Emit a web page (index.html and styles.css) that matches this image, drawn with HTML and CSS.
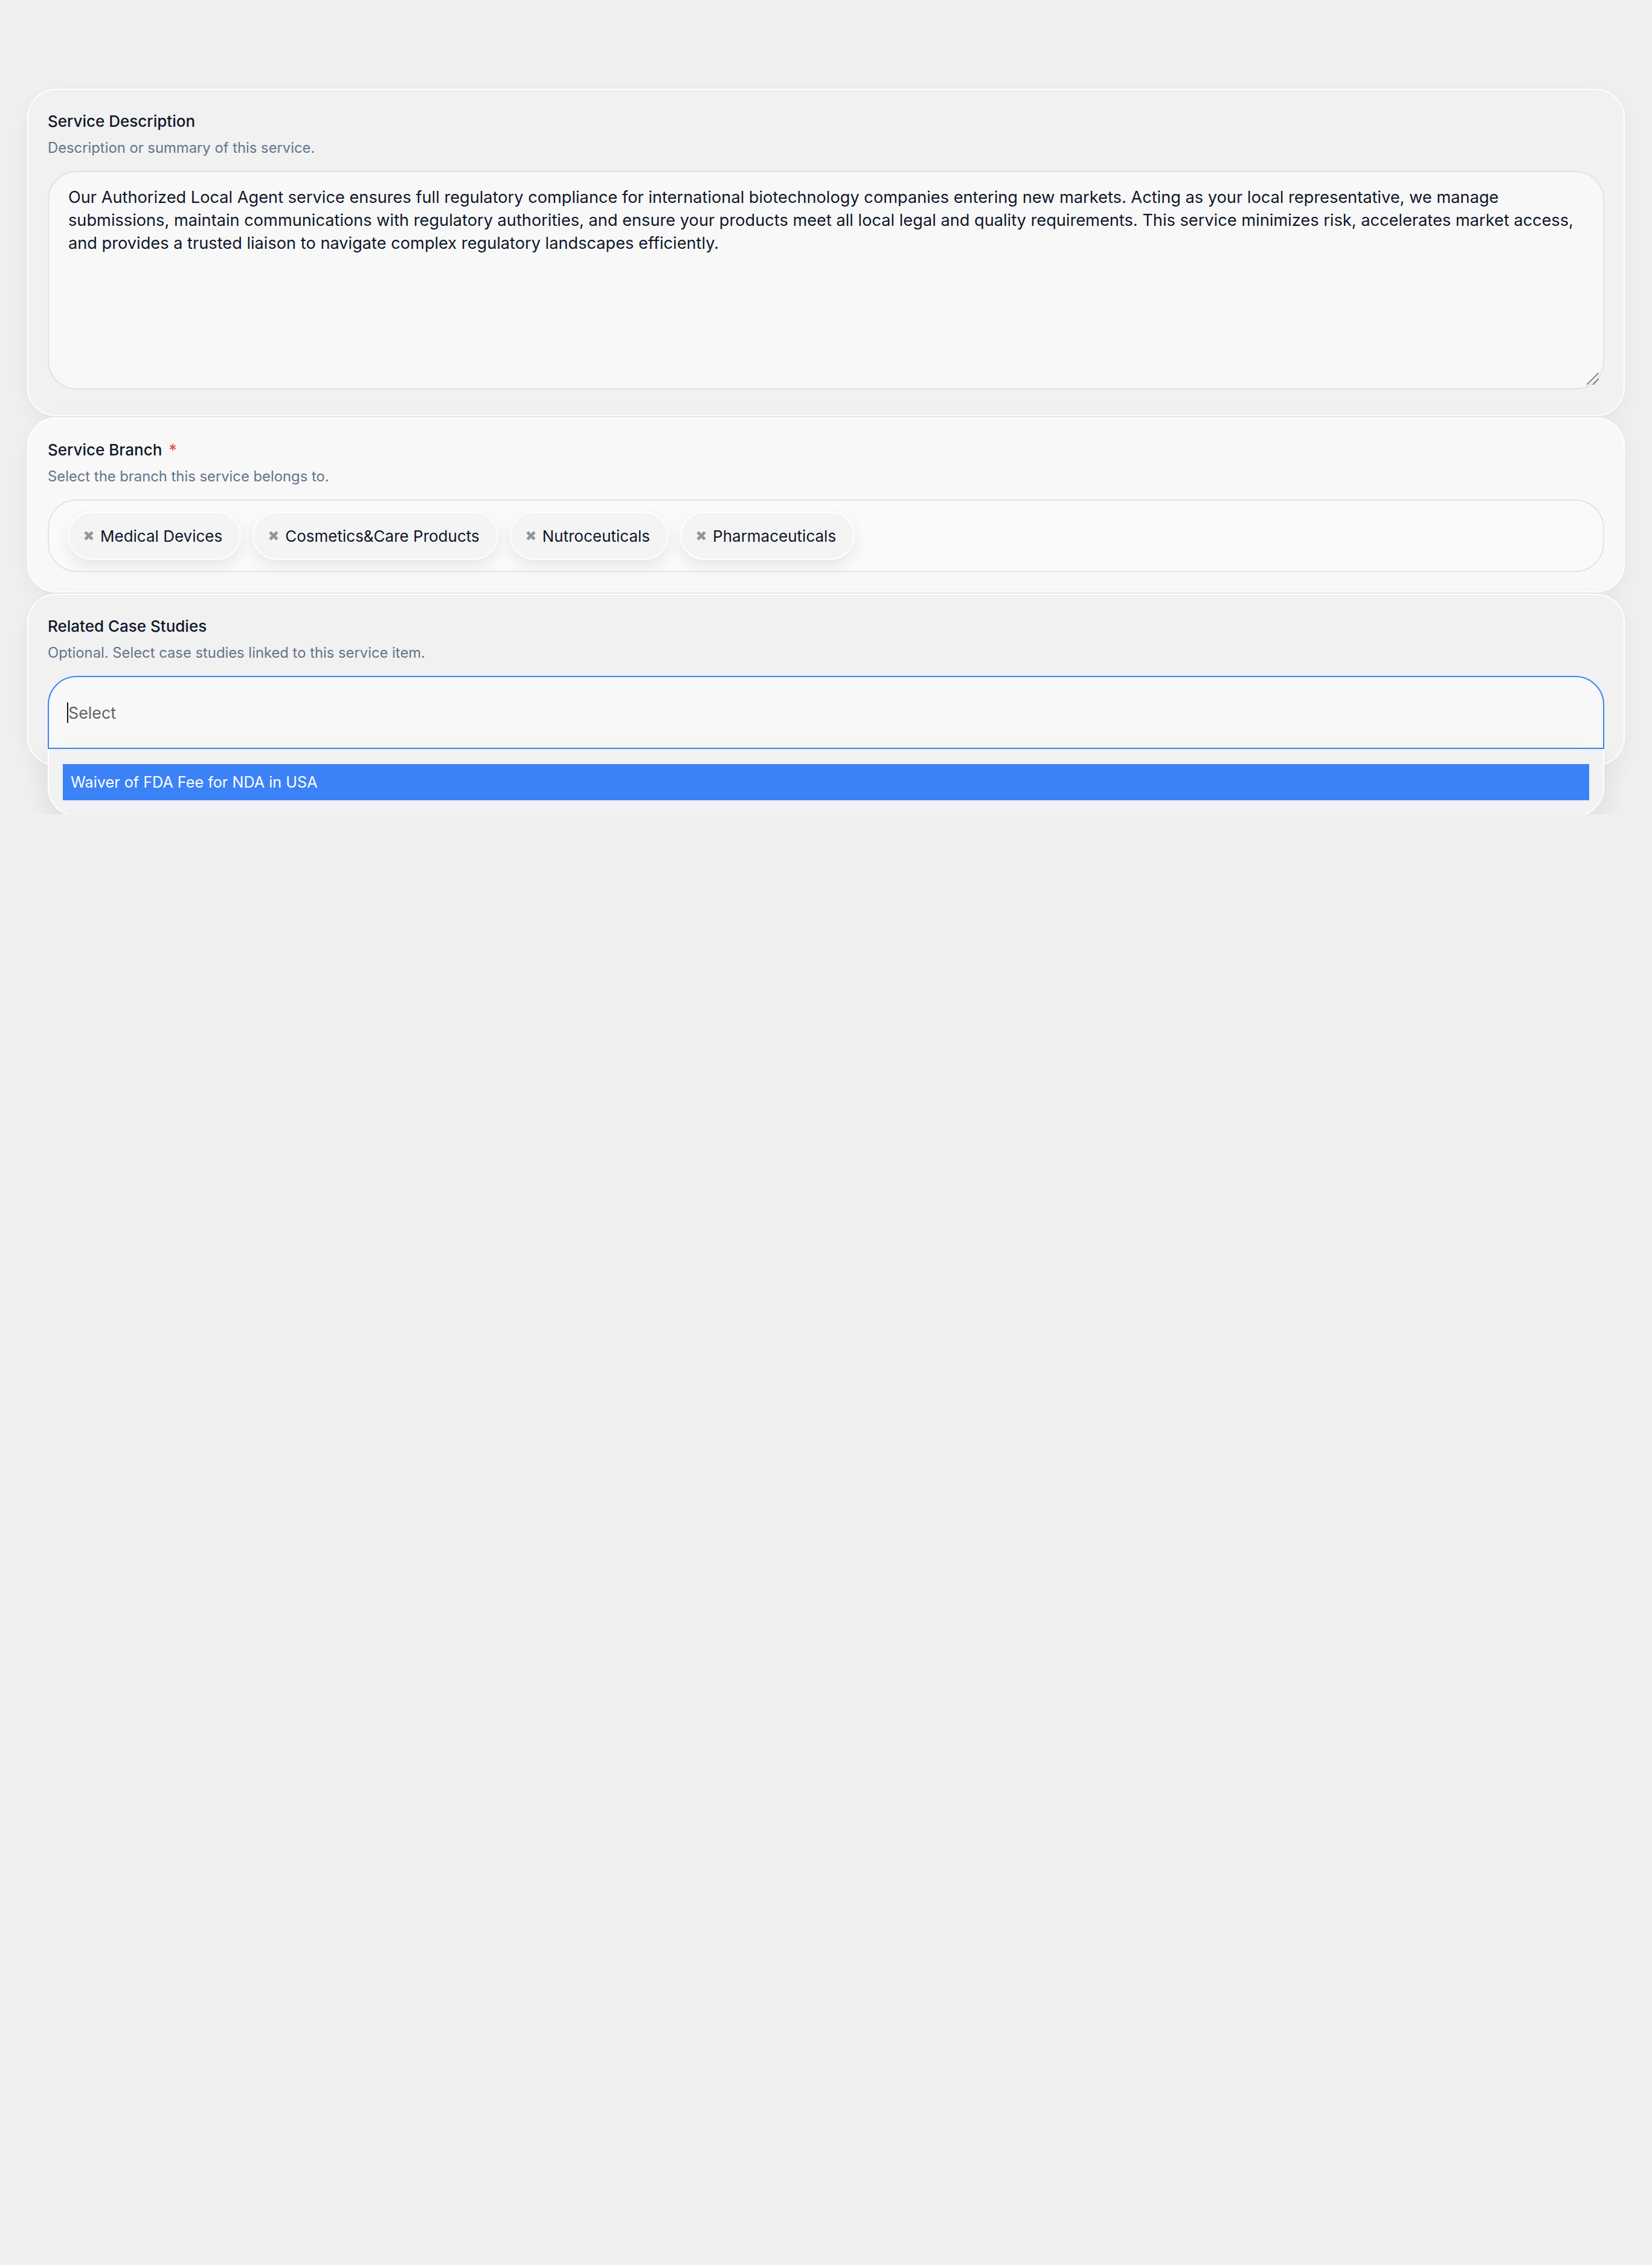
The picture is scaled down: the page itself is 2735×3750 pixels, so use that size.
FILE: index.html
```html
<!DOCTYPE html>
<html lang="en">
<head>
<meta charset="utf-8">
<title>Service form</title>
<link rel="stylesheet" href="styles.css">
</head>
<body>
<main class="form">
  <section class="card card-muted">
    <label class="field-label" for="desc">Service Description</label>
    <p class="field-help">Description or summary of this service.</p>
    <div class="textarea-wrap">
      <textarea id="desc" class="textarea">Our Authorized Local Agent service ensures full regulatory compliance for international biotechnology companies entering new markets. Acting as your local representative, we manage submissions, maintain communications with regulatory authorities, and ensure your products meet all local legal and quality requirements. This service minimizes risk, accelerates market access, and provides a trusted liaison to navigate complex regulatory landscapes efficiently.</textarea>
    </div>
  </section>

  <section class="card card-light">
    <div class="field-label">Service Branch <span class="required">*</span></div>
    <p class="field-help">Select the branch this service belongs to.</p>
    <div class="tags">
      <span class="tag"><svg class="tag-x" viewBox="0 0 8 8"><path d="M1 1L7 7M7 1L1 7"/></svg>Medical Devices</span>
      <span class="tag"><svg class="tag-x" viewBox="0 0 8 8"><path d="M1 1L7 7M7 1L1 7"/></svg>Cosmetics&amp;Care Products</span>
      <span class="tag"><svg class="tag-x" viewBox="0 0 8 8"><path d="M1 1L7 7M7 1L1 7"/></svg>Nutroceuticals</span>
      <span class="tag"><svg class="tag-x" viewBox="0 0 8 8"><path d="M1 1L7 7M7 1L1 7"/></svg>Pharmaceuticals</span>
    </div>
  </section>

  <section class="card card-muted card-last">
    <div class="field-label">Related Case Studies</div>
    <p class="field-help">Optional. Select case studies linked to this service item.</p>
    <div class="select-wrap">
      <div class="select"><span class="caret"></span><span class="placeholder">Select</span></div>
      <ul class="menu">
        <li class="option option-active">Waiver of FDA Fee for NDA in USA</li>
      </ul>
    </div>
  </section>
</main>
</body>
</html>
```

FILE: styles.css
```css
html {
  zoom: 2;
}

body {
  margin: 0;
  background: #f0f0f0;
  font-family: Inter, "Noto Sans", "Liberation Sans", sans-serif;
  color: #0f172a;
}

.form {
  padding: 73.5px 22.5px 40px;
  display: flex;
  flex-direction: column;
  gap: 1px;
}

.card {
  border: 1px solid #ffffff;
  border-radius: 24px;
  padding: 16px;
  box-shadow: 0 6px 22px rgba(0, 0, 0, 0.05);
}

.card-muted {
  background: #f1f1f1;
}

.card-light {
  background: #f8f8f8;
}

.card-last {
  padding-bottom: 13px;
}

.field-label {
  display: block;
  font-size: 13px;
  line-height: 19.5px;
  font-weight: 500;
  color: #0f172a;
}

.required {
  color: #ef4444;
  margin-left: 2px;
}

.field-help {
  margin: 4px 0 11px;
  font-size: 11.9px;
  line-height: 16.5px;
  color: #64748b;
}

.textarea-wrap {
  position: relative;
  margin-bottom: 5px;
}

.textarea-wrap::after {
  content: "";
  position: absolute;
  right: 4.5px;
  bottom: 4px;
  width: 10px;
  height: 10px;
  background: linear-gradient(135deg,
    transparent 46%, #8a8a8a 46%, #8a8a8a 53%, transparent 53%,
    transparent 72%, #8a8a8a 72%, #8a8a8a 79%, transparent 79%);
  pointer-events: none;
}

.textarea {
  display: block;
  box-sizing: border-box;
  width: 100%;
  height: 181px;
  margin: 0;
  padding: 11.5px 16px;
  border: 1px solid #e2e2e2;
  border-radius: 24px;
  background: #f8f8f8;
  font-family: Inter, "Noto Sans", "Liberation Sans", sans-serif;
  font-size: 13.6px;
  line-height: 19px;
  color: #0f172a;
  resize: none;
  outline: none;
}

.tags {
  box-sizing: border-box;
  min-height: 60px;
  display: flex;
  align-items: center;
  gap: 9.5px;
  padding: 0 15.5px;
  border: 1px solid #e3e3e3;
  border-radius: 24px;
  background: #fafafa;
}

.tag {
  box-sizing: border-box;
  height: 40px;
  display: inline-flex;
  align-items: center;
  gap: 5.5px;
  padding: 0 14.5px 0 12.5px;
  border: 1px solid #ffffff;
  border-radius: 9999px;
  background: #f4f4f4;
  font-size: 13px;
  color: #0f172a;
  box-shadow: 0 5px 12px rgba(0, 0, 0, 0.08);
}

.tag-x {
  width: 8px;
  height: 8px;
  flex: none;
  stroke: #959595;
  stroke-width: 2.4;
  fill: none;
}

.select-wrap {
  position: relative;
}

.select {
  box-sizing: border-box;
  height: 60.5px;
  display: flex;
  align-items: center;
  padding: 0 16px;
  border: 1px solid #3b82f6;
  border-radius: 24px 24px 0 0;
  background: #f8f8f8;
  font-size: 13.4px;
}

.caret {
  width: 1px;
  height: 17px;
  margin-left: -1px;
  background: #0f172a;
}

.placeholder {
  color: #5f6368;
}

.menu {
  position: absolute;
  top: 100%;
  left: 0;
  right: 0;
  z-index: 2;
  margin: 0;
  padding: 12.5px 11.5px;
  list-style: none;
  border: 1px solid #ffffff;
  border-top: none;
  border-radius: 0 0 24px 24px;
  background: #f2f2f2;
  box-shadow: 0 10px 24px rgba(0, 0, 0, 0.09);
}

.option {
  height: 30px;
  padding: 0 6.5px;
  font-size: 12.6px;
  line-height: 30px;
  color: #0f172a;
}

.option-active {
  background: #3b82f6;
  color: #ffffff;
}
```
